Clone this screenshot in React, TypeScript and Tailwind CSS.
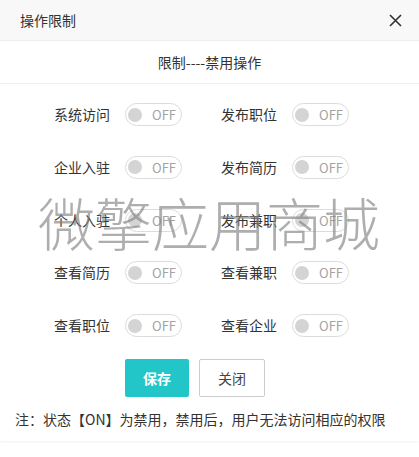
import React, { useState } from 'react';

const items = [
  ['系统访问', '发布职位'],
  ['企业入驻', '发布简历'],
  ['个人入驻', '发布兼职'],
  ['查看简历', '查看兼职'],
  ['查看职位', '查看企业'],
];

const Toggle = ({ on, onClick }: any) => (
  <button
    onClick={onClick}
    className="relative flex items-center w-[57px] h-[23px] rounded-full border border-[#dcdcdc] bg-white"
  >
    <span className="absolute left-[2px] top-1/2 -translate-y-1/2 w-[14px] h-[14px] rounded-full bg-[#d4d4d4]" />
    <span className="ml-[26px] text-[13px] leading-none text-[#a3a3a3]">{on ? 'ON' : 'OFF'}</span>
  </button>
);

export default function App() {
  const [state, setState] = useState<Record<string, boolean>>({});

  return (
    <div className="relative w-[419px] h-[457px] bg-white text-[#333] font-['Noto_Sans_CJK_SC',sans-serif]">
      <div className="w-full h-[441px] bg-white shadow-[0_1px_2px_rgba(0,0,0,0.06)] flex flex-col">
        {/* 头部 */}
        <div className="h-[41px] flex items-center justify-between pl-[20px] pr-[16px] bg-[#f8f8f8] border-b border-[#eeeeee]">
          <span className="text-[14px]">操作限制</span>
          <svg width="13" height="13" viewBox="0 0 13 13" className="mr-[1px]">
            <path d="M1 1L12 12M12 1L1 12" stroke="#2f3033" strokeWidth="1.6" />
          </svg>
        </div>

        <div className="h-[43px] flex items-center justify-center border-b border-[#eeeeee] text-[14px]">
          限制----禁用操作
        </div>

        {/* 开关列表 */}
        <div className="flex flex-col gap-[29.75px] pt-[19px] pl-[54px]">
          {items.map((row, i) => (
            <div key={i} className="flex h-[23px] items-center">
              {row.map((label) => (
                <div key={label} className="flex items-center w-[167px]">
                  <span className="text-[14px] w-[71px]">{label}</span>
                  <Toggle on={!!state[label]} onClick={() => setState({ ...state, [label]: !state[label] })} />
                </div>
              ))}
            </div>
          ))}
        </div>

        <div className="flex gap-[10px] pl-[125px] mt-[22px]">
          <button className="w-[64px] h-[38px] rounded-[2px] bg-[#23c6c8] text-white text-[14px] font-bold">保存</button>
          <button className="w-[66px] h-[38px] rounded-[2px] border border-[#cccccc] bg-white text-[14px] text-[#444]">关闭</button>
        </div>

        <div className="pl-[15px] mt-[12px] text-[14px]">注：状态【ON】为禁用，禁用后，用户无法访问相应的权限</div>
      </div>

      {/* 水印 */}
      <div className="absolute left-[38px] top-[193px] text-[57px] leading-none font-light text-[rgba(130,130,130,0.65)] pointer-events-none whitespace-nowrap">
        微擎应用商城
      </div>
    </div>
  );
}
